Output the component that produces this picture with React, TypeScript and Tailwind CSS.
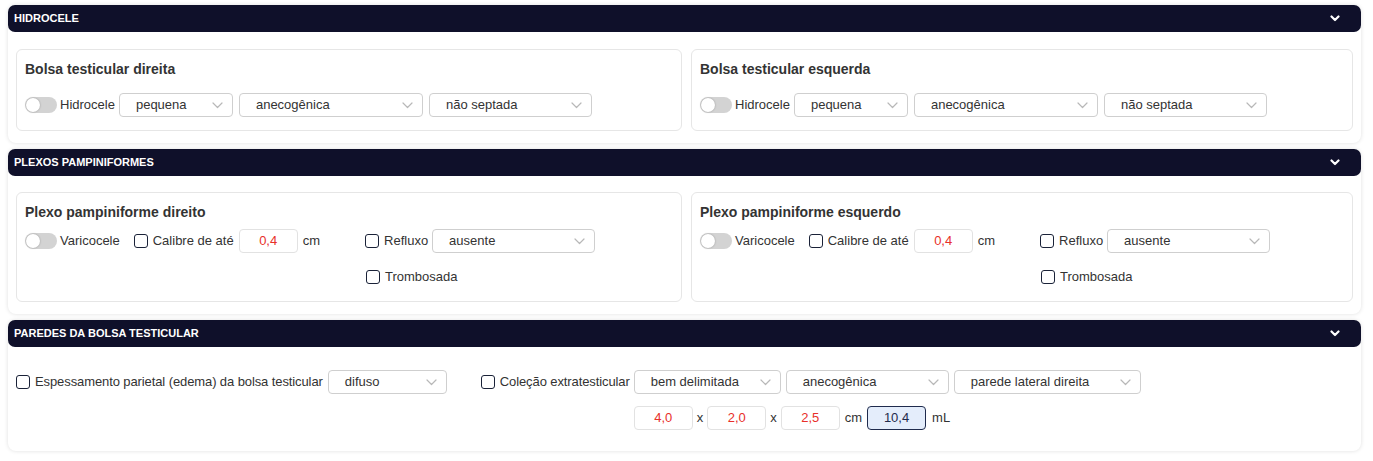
import React from "react";

const Chevron = () => (
  <svg width="11" height="7" viewBox="0 0 11 7" fill="none">
    <path d="M1 1L5.5 5.5L10 1" stroke="#b8b8b8" strokeWidth="1.2" strokeLinecap="round" strokeLinejoin="round" />
  </svg>
);

const HeaderChevron = () => (
  <svg width="10" height="7" viewBox="0 0 10 7" fill="none">
    <path d="M1.5 1.5L5 5L8.5 1.5" stroke="#ffffff" strokeWidth="2.2" strokeLinecap="round" strokeLinejoin="round" />
  </svg>
);

function Select({ value, w }: { value: string; w: string }) {
  return (
    <div className={`${w} h-6 shrink-0 border border-[#cfcfcf] rounded-[4px] bg-white flex items-center justify-between pl-4 pr-[9px] text-[13px] text-[#333]`}>
      <span>{value}</span>
      <Chevron />
    </div>
  );
}

function Toggle({ label }: { label: string }) {
  return (
    <div className="flex items-center gap-[3px]">
      <div className="w-8 h-4 rounded-full bg-[#d3d3d3] flex items-center px-[1px]">
        <div className="w-[14px] h-[14px] rounded-full bg-white shadow-[0_0_2px_rgba(0,0,0,0.3)]" />
      </div>
      <span className="text-[13px] text-[#333]">{label}</span>
    </div>
  );
}

function Check({ label, tight }: { label: string; tight?: boolean }) {
  return (
    <div className="flex items-center gap-[5px]">
      <div className="w-[14px] h-[14px] border-[1.5px] border-[#1a2238] rounded-[3px] bg-white shrink-0" />
      <span className={tight ? "text-[13px] text-[#333] whitespace-nowrap tracking-[-0.1px]" : "text-[13px] text-[#333] whitespace-nowrap"}>{label}</span>
    </div>
  );
}

function Num({ value, blue }: { value: string; blue?: boolean }) {
  return (
    <div
      className={
        blue
          ? "w-[59px] h-6 border border-[#1f2b4d] rounded-[4px] bg-[#e4edfb] flex items-center justify-center text-[13px] text-[#1f2b4d]"
          : "w-[59px] h-6 border border-[#e2e2e2] rounded-[4px] bg-white flex items-center justify-center text-[13px] text-[#e8302a]"
      }
    >
      {value}
    </div>
  );
}

function Header({ title }: { title: string }) {
  return (
    <div className="h-[27px] bg-[#0f102a] rounded-[7px] flex items-center justify-between pl-[6px] pr-[21px]">
      <span className="text-white text-[11px] font-bold">{title}</span>
      <HeaderChevron />
    </div>
  );
}

function Card({ title, children }: { title: string; children: React.ReactNode }) {
  return (
    <div className="bg-white rounded-lg shadow-[0_0_4px_rgba(0,0,0,0.13)]">
      <Header title={title} />
      {children}
    </div>
  );
}

function BolsaBox({ title }: { title: string }) {
  return (
    <div className="border border-[#e6e6e6] rounded-md pt-[9px] pb-[13px] pl-2 pr-2">
      <div className="h-5 flex items-center text-[14px] font-bold text-[#333]">{title}</div>
      <div className="mt-[14px] h-6 flex items-center">
        <Toggle label="Hidrocele" />
        <div className="ml-[4px] flex items-center gap-[6px]">
          <Select value="pequena" w="w-[114px]" />
          <Select value="anecogênica" w="w-[184px]" />
          <Select value="não septada" w="w-[163px]" />
        </div>
      </div>
    </div>
  );
}

function PlexoBox({ title }: { title: string }) {
  return (
    <div className="border border-[#e6e6e6] rounded-md pt-[9px] pb-[12px] pl-2 pr-2">
      <div className="h-5 flex items-center text-[14px] font-bold text-[#333]">{title}</div>
      <div className="mt-[7px] h-6 flex items-center">
        <Toggle label="Varicocele" />
        <div className="ml-[14px]">
          <Check label="Calibre de até" />
        </div>
        <div className="ml-[5px]">
          <Num value="0,4" />
        </div>
        <span className="ml-[5px] text-[13px] text-[#333]">cm</span>
        <div className="ml-[45px] flex items-center gap-[4px]">
          <Check label="Refluxo" />
          <Select value="ausente" w="w-[163px]" />
        </div>
      </div>
      <div className="mt-[12px] h-6 flex items-center pl-[341px]">
        <Check label="Trombosada" />
      </div>
    </div>
  );
}

export default function App() {
  return (
    <div className="w-[1373px] bg-white pt-[5px] pl-2 pr-3 pb-3 flex flex-col gap-[6px] font-['Liberation_Sans',Arial,Helvetica,sans-serif]">
      <Card title="HIDROCELE">
        <div className="pt-[17px] pb-[12px] px-2 grid grid-cols-[666px_1fr] gap-[9px]">
          <BolsaBox title="Bolsa testicular direita" />
          <BolsaBox title="Bolsa testicular esquerda" />
        </div>
      </Card>
      <Card title="PLEXOS PAMPINIFORMES">
        <div className="pt-[16px] pb-[12px] px-2 grid grid-cols-[666px_1fr] gap-[9px]">
          <PlexoBox title="Plexo pampiniforme direito" />
          <PlexoBox title="Plexo pampiniforme esquerdo" />
        </div>
      </Card>
      <Card title="PAREDES DA BOLSA TESTICULAR">
        <div className="pt-[23px] pb-[21px] pl-2 pr-2 flex items-start">
          <div className="h-6 flex items-center gap-[5px]">
            <Check label="Espessamento parietal (edema) da bolsa testicular" tight />
            <Select value="difuso" w="w-[119px]" />
          </div>
          <div className="ml-[34px] grid grid-cols-[auto_auto] gap-x-[4px] gap-y-[12px]">
            <div className="h-6 flex items-center">
              <Check label="Coleção extratesticular" tight />
            </div>
            <div className="h-6 flex items-center gap-[5px]">
              <Select value="bem delimitada" w="w-[147px]" />
              <Select value="anecogênica" w="w-[163px]" />
              <Select value="parede lateral direita" w="w-[187px]" />
            </div>
            <div />
            <div className="h-6 flex items-center text-[13px] text-[#333]">
              <Num value="4,0" />
              <span className="mx-[4px]">x</span>
              <Num value="2,0" />
              <span className="mx-[4px]">x</span>
              <Num value="2,5" />
              <span className="ml-[5px] mr-[5px]">cm</span>
              <Num value="10,4" blue />
              <span className="ml-[6px]">mL</span>
            </div>
          </div>
        </div>
      </Card>
    </div>
  );
}
